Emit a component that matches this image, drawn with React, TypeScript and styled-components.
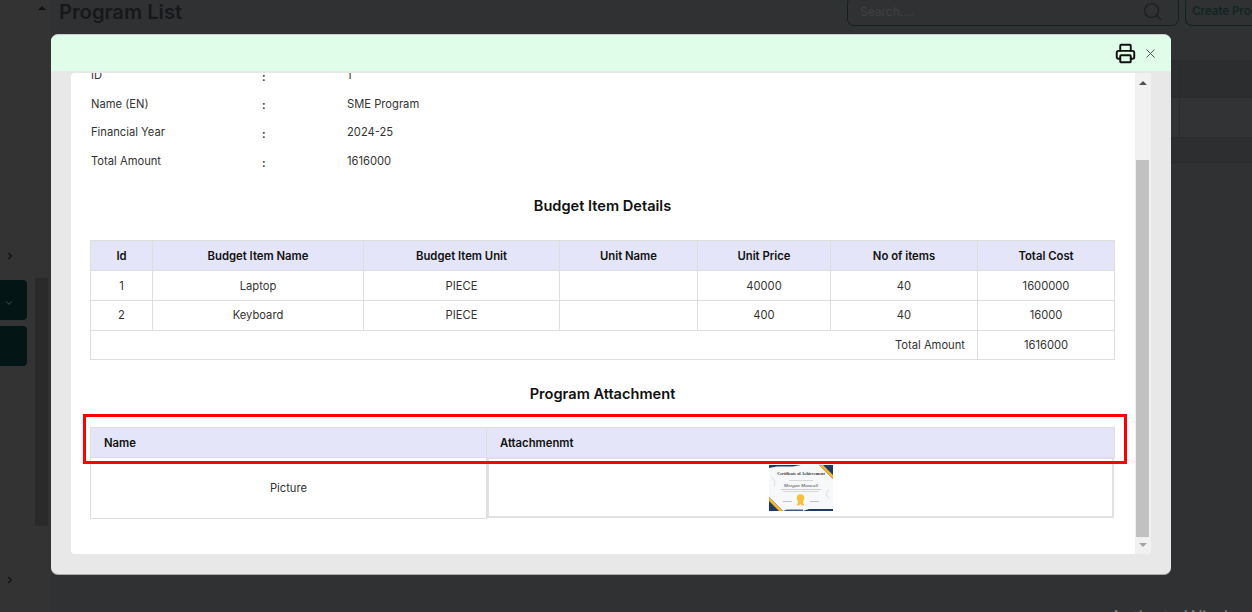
import React from 'react';
import styled, { createGlobalStyle } from 'styled-components';
import { ChevronDown, ChevronRight, Printer, Search, X } from 'lucide-react';

const GlobalStyle = createGlobalStyle`
  html, body {
    margin: 0;
    height: 612px;
    overflow: hidden;
    background: #2f3032;
    font-family: Inter, "Liberation Sans", sans-serif;
  }
  * { box-sizing: border-box; }
`;

const Page = styled.div`
  position: relative;
  width: 1252px;
  height: 612px;
  overflow: hidden;
  display: flex;
  background: #303133;
`;

/* dimmed page behind the modal */
const Sidebar = styled.aside`
  width: 51px;
  height: 612px;
  flex: none;
  display: flex;
  background: #333334;
`;

const SideNav = styled.nav`
  width: 27px;
  padding-top: 249px;
  display: flex;
  flex-direction: column;
`;

const SideChevron = styled.div`
  height: 14px;
  margin-top: ${p => p.$gap || 0}px;
  padding-left: 5px;
  color: #111414;
  display: flex;
  align-items: center;
`;

const SideItem = styled.div`
  height: 40px;
  margin-top: ${p => p.$gap}px;
  padding: 6px 0 0 4px;
  border-radius: 0 4px 4px 0;
  background: #031615;
  color: #3b4645;
  display: flex;
  align-items: center;
`;

const SideScroll = styled.div`
  width: 13px;
  margin-left: 8px;
  display: flex;
  flex-direction: column;
  align-items: center;
`;

const SideArrow = styled.div`
  margin-top: 6px;
  width: 0;
  height: 0;
  border-left: 4px solid transparent;
  border-right: 4px solid transparent;
  border-bottom: 4px solid #111;
`;

const SideThumb = styled.div`
  width: 13px;
  height: 248px;
  margin-top: 268px;
  background: #2a2a2b;
`;

const Main = styled.main`
  flex: 1;
  min-width: 0;
`;

const TopBar = styled.header`
  height: 64px;
  margin-top: -4px;
  padding-left: 8px;
  display: flex;
  align-items: flex-start;
`;

const Title = styled.h1`
  margin: 0;
  width: 788px;
  flex: none;
  line-height: 31px;
  font-size: 20.2px;
  font-weight: 600;
  color: #16181a;
  white-space: nowrap;
`;

const SearchBox = styled.div`
  width: 332px;
  height: 30px;
  flex: none;
  padding: 0 15px 0 12px;
  display: flex;
  align-items: center;
  justify-content: space-between;
  border: 1px solid #10211f;
  border-radius: 7px;
  font-size: 12px;
  color: #3f4142;
`;

const CreateButton = styled.div`
  margin-left: 6px;
  width: 100px;
  height: 30px;
  flex: none;
  padding-left: 6px;
  display: flex;
  align-items: center;
  border: 1px solid #10211f;
  border-right: none;
  border-radius: 7px 0 0 7px;
  font-size: 11.5px;
  font-weight: 600;
  color: #102522;
  white-space: nowrap;
`;

const BackRow = styled.div`
  height: ${p => p.$h}px;
  background: ${p => p.$bg};
  border-bottom: 1px solid #2a2b2d;
  display: flex;
  justify-content: flex-end;
`;

const BackCell = styled.div`
  width: 73px;
  border-left: 1px solid #2a2b2d;
`;

const WindowsNote = styled.div`
  position: absolute;
  left: 1110px;
  top: 607px;
  font-size: 18px;
  color: #77787a;
  white-space: nowrap;
`;

/* modal */
const Backdrop = styled.div`
  position: absolute;
  inset: 0;
  padding: 34px 81px 37px 51px;
`;

const Modal = styled.div`
  height: 541px;
  display: flex;
  flex-direction: column;
  overflow: hidden;
  border-radius: 7px;
  background: #e8e8e8;
  border-top: 1px solid #c9cdcc;
  border-bottom: 1px solid #a9abab;
`;

const ModalHeader = styled.div`
  height: 36px;
  flex: none;
  padding-right: 13px;
  display: flex;
  align-items: center;
  justify-content: flex-end;
  gap: 7px;
  background: #e0fdea;
`;

const CloseIcon = styled(X)`
  color: #555;
`;

const ModalBody = styled.div`
  flex: 1;
  min-height: 0;
  margin: 2px 20px 20px;
  display: flex;
  border-radius: 4px 0 0 4px;
  overflow: hidden;
  background: #fff;
`;

const ScrollArea = styled.div`
  flex: 1;
  min-width: 0;
  overflow: hidden;
  padding: 0 20px 0 19px;
`;

const ScrollInner = styled.div`
  margin-top: -12px;
`;

const Scrollbar = styled.div`
  width: 16px;
  flex: none;
  padding: 8px 2px 0 1px;
  display: flex;
  flex-direction: column;
  align-items: center;
  background: #f1f1f1;
`;

const ScrollUp = styled.div`
  width: 0;
  height: 0;
  border-left: 4px solid transparent;
  border-right: 4px solid transparent;
  border-bottom: 4px solid #505050;
`;

const ScrollThumb = styled.div`
  width: 13px;
  height: 377px;
  margin: 75px 0 6px;
  flex: none;
  background: #c1c1c1;
`;

const ScrollDown = styled.div`
  width: 0;
  height: 0;
  border-left: 4px solid transparent;
  border-right: 4px solid transparent;
  border-top: 4px solid #a3a3a3;
`;

const InfoRow = styled.div`
  height: 28.6px;
  display: grid;
  grid-template-columns: 171px 85px 1fr;
  align-items: center;
  padding-left: 1px;
  font-size: 11.2px;
  color: #333;
`;

const InfoColon = styled.span`
  padding-top: 3px;
  font-weight: 600;
`;

const SectionTitle = styled.h2`
  margin: ${p => p.$top}px 0 ${p => p.$bottom}px;
  width: 1025px;
  height: 20px;
  line-height: 20px;
  text-align: center;
  font-size: 14.6px;
  font-weight: 600;
  color: #111;
`;

const Table = styled.table`
  width: 1024px;
  border-collapse: collapse;
  table-layout: fixed;
  font-size: 11.2px;
  color: #333;
`;

const HeadCell = styled.th`
  height: 29.75px;
  padding: ${p => (p.$left ? '0 0 0 13px' : '0')};
  text-align: ${p => (p.$left ? 'left' : 'center')};
  font-size: 11.3px;
  font-weight: 600;
  color: #111;
  background: #e4e5f8;
  border: 1px solid #dedede;
`;

const Cell = styled.td`
  height: 29.75px;
  padding: 0;
  text-align: center;
  border: 1px solid #dedede;
`;

const TotalLabel = styled(Cell)`
  text-align: right;
  padding-right: 12px;
`;

const AttachmentName = styled(Cell)`
  height: 61px;
`;

const AttachmentCell = styled.td`
  height: 61px;
  padding: 0;
  border-bottom: 1px solid #fff;
  border-right: 1px solid #fff;
`;

const AttachmentFrame = styled.div`
  height: 60px;
  display: flex;
  align-items: center;
  justify-content: center;
  border: 2px solid #e2e2e2;
  border-top-width: 1px;
  padding-top: 1px;
  background: #fff;
`;

const RedMark = styled.div`
  position: absolute;
  left: 83px;
  top: 414px;
  width: 1044px;
  height: 50px;
  border: 3px solid #fe0000;
`;

const budgetRows = [
  { id: 1, name: 'Laptop', unit: 'PIECE', price: 40000, count: 40, total: 1600000 },
  { id: 2, name: 'Keyboard', unit: 'PIECE', price: 400, count: 40, total: 16000 },
];

const budgetColumns = [62, 211, 196, 138, 133, 147, 137];

const infoRows = [
  ['ID', '1'],
  ['Name (EN)', 'SME Program'],
  ['Financial Year', '2024-25'],
  ['Total Amount', '1616000'],
];

const Certificate = () => (
  <svg width="64" height="46" viewBox="0 0 64 46">
    <rect width="64" height="46" fill="#f7f8f9" />
    <path d="M0 0h32l-8 1.5H8L0 3z" fill="#1f3a63" />
    <path d="M50 0h14v14z" fill="#1f3a63" />
    <path d="M50 0h4l10 10v4z" fill="#f2b632" />
    <path d="M0 32l14 14H0z" fill="#1f3a63" />
    <path d="M0 32l14 14h-4L0 36z" fill="#f2b632" />
    <path d="M34 46l6-2h24v2z" fill="#1f3a63" />
    <path d="M14 46l4-1.5h16V46z" fill="#3c5a86" />
    <path d="M2 12q6 4 3 10M60 24q-5 5 0 10" stroke="#dfe2e5" fill="none" />
    <text x="32" y="9.5" fontSize="4.2" fontWeight="700" textAnchor="middle" fill="#333" fontFamily="Liberation Serif">
      Certificate of Achievement
    </text>
    <text x="32" y="21.5" fontSize="5" fontStyle="italic" textAnchor="middle" fill="#444" fontFamily="Liberation Serif">
      Morgan Maxwell
    </text>
    <rect x="20" y="15" width="24" height="0.7" fill="#c9c9c9" />
    <rect x="12" y="24" width="40" height="0.7" fill="#bbb" />
    <rect x="14" y="26" width="36" height="0.7" fill="#c9c9c9" />
    <circle cx="31.5" cy="33" r="3.8" fill="#f3c23c" />
    <path d="M29 36l-1 5 3.5-1.5 3.5 1.5-1-5z" fill="#f3c23c" />
    <rect x="14" y="36" width="9" height="0.7" fill="#aaa" />
    <rect x="41" y="36" width="9" height="0.7" fill="#aaa" />
  </svg>
);

const App: React.FC = () => (
  <Page>
    <GlobalStyle />
    <Sidebar>
      <SideNav>
        <SideChevron>
          <ChevronRight size={10} strokeWidth={3.5} />
        </SideChevron>
        <SideItem $gap={17}>
          <ChevronDown size={10} strokeWidth={2.5} />
        </SideItem>
        <SideItem $gap={6} />
        <SideChevron $gap={207}>
          <ChevronRight size={10} strokeWidth={3.5} />
        </SideChevron>
      </SideNav>
      <SideScroll>
        <SideArrow />
        <SideThumb />
      </SideScroll>
    </Sidebar>
    <Main>
      <TopBar>
        <Title>Program List</Title>
        <SearchBox>
          Search....
          <Search size={21} strokeWidth={1.6} color="#1d1f20" />
        </SearchBox>
        <CreateButton>Create Program</CreateButton>
      </TopBar>
      <BackRow $h={38} $bg="#2c2d2f">
        <BackCell />
      </BackRow>
      <BackRow $h={40} $bg="#323334">
        <BackCell />
      </BackRow>
      <BackRow $h={25} $bg="#2d2e30" />
    </Main>
    <WindowsNote>Activate Windows</WindowsNote>

    <Backdrop>
      <Modal>
        <ModalHeader>
          <Printer size={21} strokeWidth={2.2} color="#111" />
          <CloseIcon size={15} strokeWidth={1.6} />
        </ModalHeader>
        <ModalBody>
          <ScrollArea>
            <ScrollInner>
              {infoRows.map(([label, value]) => (
                <InfoRow key={label}>
                  <span>{label}</span>
                  <InfoColon>:</InfoColon>
                  <span>{value}</span>
                </InfoRow>
              ))}

              <SectionTitle $top={21} $bottom={24}>
                Budget Item Details
              </SectionTitle>
              <Table>
                <colgroup>
                  {budgetColumns.map((w, i) => (
                    <col key={i} width={w} />
                  ))}
                </colgroup>
                <thead>
                  <tr>
                    <HeadCell>Id</HeadCell>
                    <HeadCell>Budget Item Name</HeadCell>
                    <HeadCell>Budget Item Unit</HeadCell>
                    <HeadCell>Unit Name</HeadCell>
                    <HeadCell>Unit Price</HeadCell>
                    <HeadCell>No of items</HeadCell>
                    <HeadCell>Total Cost</HeadCell>
                  </tr>
                </thead>
                <tbody>
                  {budgetRows.map(row => (
                    <tr key={row.id}>
                      <Cell>{row.id}</Cell>
                      <Cell>{row.name}</Cell>
                      <Cell>{row.unit}</Cell>
                      <Cell />
                      <Cell>{row.price}</Cell>
                      <Cell>{row.count}</Cell>
                      <Cell>{row.total}</Cell>
                    </tr>
                  ))}
                  <tr>
                    <TotalLabel colSpan={6}>Total Amount</TotalLabel>
                    <Cell>1616000</Cell>
                  </tr>
                </tbody>
              </Table>

              <SectionTitle $top={24} $bottom={23}>
                Program Attachment
              </SectionTitle>
              <Table>
                <colgroup>
                  <col width={396} />
                  <col width={628} />
                </colgroup>
                <thead>
                  <tr>
                    <HeadCell $left>Name</HeadCell>
                    <HeadCell $left>Attachmenmt</HeadCell>
                  </tr>
                </thead>
                <tbody>
                  <tr>
                    <AttachmentName>Picture</AttachmentName>
                    <AttachmentCell>
                      <AttachmentFrame>
                        <Certificate />
                      </AttachmentFrame>
                    </AttachmentCell>
                  </tr>
                </tbody>
              </Table>
            </ScrollInner>
          </ScrollArea>
          <Scrollbar>
            <ScrollUp />
            <ScrollThumb />
            <ScrollDown />
          </Scrollbar>
        </ModalBody>
      </Modal>
    </Backdrop>
    <RedMark />
  </Page>
);

export default App;
